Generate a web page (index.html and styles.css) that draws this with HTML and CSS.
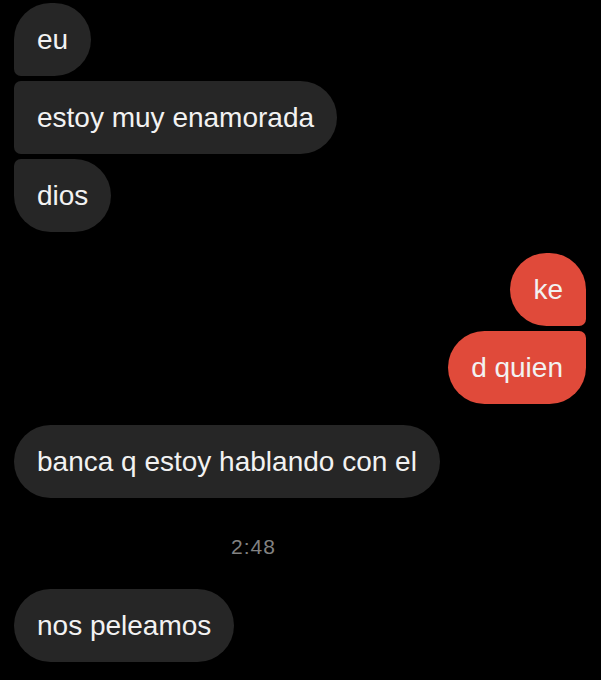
FILE: index.html
```html
<!DOCTYPE html>
<html lang="es">
<head>
    <meta charset="UTF-8">
    <meta name="viewport" content="width=device-width, initial-scale=1.0">
    <title>Chat</title>
    <link rel="stylesheet" href="styles.css">
</head>
<body>
    <div id="thread">
        <div class="msg in first">eu</div>
        <div class="msg in mid">estoy muy enamorada</div>
        <div class="msg in last">dios</div>

        <div class="msg out first group">ke</div>
        <div class="msg out last">d quien</div>

        <div class="msg in single group">banca q estoy hablando con el</div>

        <div class="stamp">2:48</div>

        <div class="msg in single after-stamp">nos peleamos</div>
    </div>
</body>
</html>
```

FILE: styles.css
```css
body {
    margin: 0;
    height: 100vh;
    overflow: hidden;
    background-color: #000000;
    font-family: "Liberation Sans", Arial, sans-serif;
}

#thread {
    display: flex;
    flex-direction: column;
    gap: 5px;
    padding: 3px 15px 0 14px;
}

.msg {
    display: flex;
    align-items: center;
    height: 73px;
    padding: 0 23px;
    font-size: 28px;
    color: #f2f2f2;
    border-radius: 37px;
    white-space: nowrap;
}

.msg.in {
    align-self: flex-start;
    background-color: #262626;
}

.msg.out {
    align-self: flex-end;
    background-color: #e04a3a;
}

.msg.in.first {
    border-bottom-left-radius: 7px;
}

.msg.in.mid {
    border-top-left-radius: 7px;
    border-bottom-left-radius: 7px;
}

.msg.in.last {
    border-top-left-radius: 7px;
}

.msg.out.first {
    border-bottom-right-radius: 7px;
}

.msg.out.last {
    border-top-right-radius: 7px;
}

.group {
    margin-top: 16px;
}

.stamp {
    margin: 32px 93px 0 0;
    line-height: 24px;
    text-align: center;
    font-size: 21px;
    letter-spacing: 1px;
    color: #828282;
}

.after-stamp {
    margin-top: 25px;
}
```
